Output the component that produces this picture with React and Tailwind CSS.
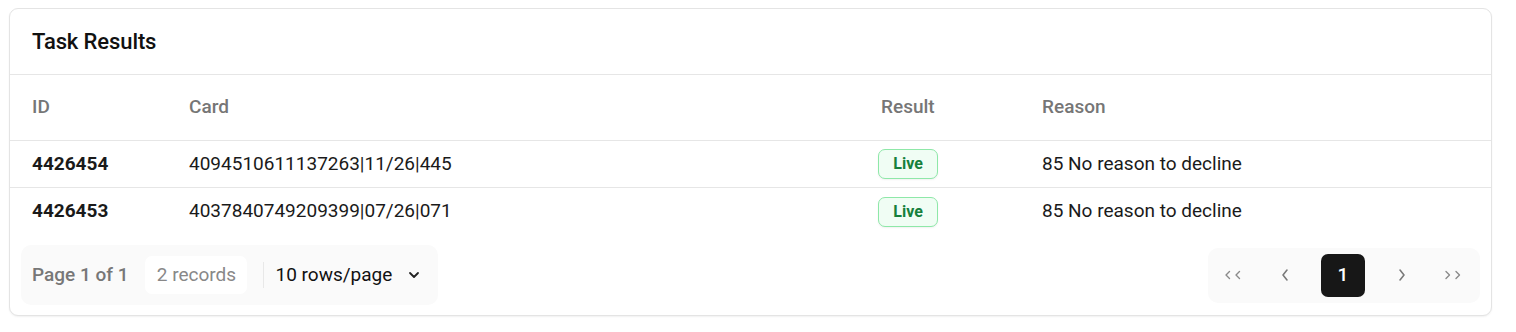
import React from 'react';

const rows = [
  { id: '4426454', card: '4094510611137263|11/26|445', result: 'Live', reason: '85 No reason to decline' },
  { id: '4426453', card: '4037840749209399|07/26|071', result: 'Live', reason: '85 No reason to decline' },
];

const cols = 'grid grid-cols-[179px_689px_164px_1fr]';

function Chevron({ dir = 'left', double = false }) {
  const one = dir === 'left' ? 'M5 1 L1 6 L5 11' : 'M1 1 L5 6 L1 11';
  const small = dir === 'left' ? 'M4.5 1 L1 4.5 L4.5 8' : 'M1 1 L4.5 4.5 L1 8';
  return double ? (
    <svg width="20" height="12" viewBox="0 0 20 12" fill="none" stroke="#8a8a8a" strokeWidth="1.4" strokeLinecap="round" strokeLinejoin="round">
      <path d={small} transform="translate(2 1.5)" />
      <path d={small} transform="translate(12 1.5)" />
    </svg>
  ) : (
    <svg width="8" height="14" viewBox="0 0 8 14" fill="none" stroke="#7a7a7a" strokeWidth="1.6" strokeLinecap="round" strokeLinejoin="round">
      <path d={one} transform="translate(1 1)" />
    </svg>
  );
}

export default function App() {
  return (
    <div className="bg-white min-h-screen pt-2 pl-[9px]" style={{ fontFamily: 'Roboto, "Liberation Sans", sans-serif' }}>
      <div className="w-[1483px] h-[308px] border border-[#e4e4e4] rounded-[9px] shadow-[0_1px_2px_rgba(0,0,0,0.06)] bg-white overflow-hidden flex flex-col">
        <div className="h-[66px] border-b border-[#e6e6e6] flex items-center px-[22px]">
          <h2 className="text-[22px] font-medium text-[#111] tracking-[-0.1px]">Task Results</h2>
        </div>

        <div className={`${cols} h-[66px] items-center border-b border-[#e6e6e6] text-[19px] font-medium text-[#767676]`}>
          <div className="pl-[22px]">ID</div>
          <div>Card</div>
          <div className="pl-[3px]">Result</div>
          <div>Reason</div>
        </div>

        {rows.map((r, i) => (
          <div key={r.id} className={`${cols} h-[47px] items-center text-[19px] text-[#1a1a1a] ${i === 0 ? 'border-b border-[#e6e6e6]' : ''}`}>
            <div className="pl-[22px] font-bold">{r.id}</div>
            <div>{r.card}</div>
            <div className="flex">
              <span className="w-[60px] h-[30px] flex items-center justify-center rounded-[7px] border border-[#8ee8a8] bg-[#f0fdf4] text-[#16803c] text-[16px] font-bold shadow-[0_1px_2px_rgba(0,0,0,0.06)]">
                {r.result}
              </span>
            </div>
            <div>{r.reason}</div>
          </div>
        ))}

        <div className="flex items-center justify-between px-[11px] pt-[10px]">
          <div className="flex items-center h-[60px] w-[417px] rounded-[10px] bg-[#fafafa] pl-[11px] text-[19px]">
            <span className="font-medium text-[#777]">Page 1 of 1</span>
            <span className="ml-[17px] h-[38px] w-[102px] rounded-[7px] bg-white flex items-center justify-center text-[#888]">2 records</span>
            <span className="ml-[16px] w-px h-[26px] bg-[#e8e8e8]" />
            <span className="ml-[11px] text-[#111]">10 rows/page</span>
            <svg className="ml-[14px]" width="16" height="16" viewBox="0 0 16 16" fill="none" stroke="#222" strokeWidth="1.8" strokeLinecap="round" strokeLinejoin="round">
              <path d="M4 6 L8 10 L12 6" />
            </svg>
          </div>

          <div className="flex items-center h-[55px] w-[272px] rounded-[10px] bg-[#fafafa] pl-[10px] pr-[12px] justify-between">
            <button className="w-[30px] h-[30px] flex items-center justify-center"><Chevron dir="left" double /></button>
            <button className="w-[30px] h-[30px] flex items-center justify-center"><Chevron dir="left" /></button>
            <button className="w-[44px] h-[43px] rounded-[7px] bg-[#171717] text-white text-[19px] font-medium flex items-center justify-center">1</button>
            <button className="w-[30px] h-[30px] flex items-center justify-center"><Chevron dir="right" /></button>
            <button className="w-[30px] h-[30px] flex items-center justify-center"><Chevron dir="right" double /></button>
          </div>
        </div>
      </div>
    </div>
  );
}
